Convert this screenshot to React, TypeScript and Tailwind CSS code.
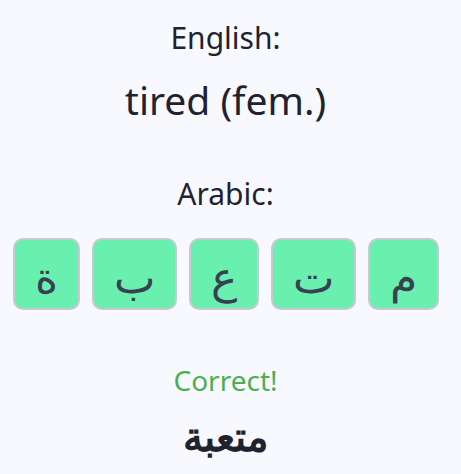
const letters = ["ة", "ب", "ع", "ت", "م"];

export default function App() {
  return (
    <div
      className="min-h-screen bg-[#f8f9ff] pr-[10px] text-[#1f2330] flex flex-col items-center"
      style={{ fontFamily: '"Segoe UI", "Noto Sans", "Open Sans", sans-serif' }}
    >
      <p className="mt-[18px] text-[30px] leading-[40px]">English:</p>
      <p className="mt-[20px] text-[39px] leading-[44px]">tired (fem.)</p>
      <p className="mt-[52px] text-[30px] leading-[40px]">Arabic:</p>
      <div className="mt-[24px] flex gap-3">
        {letters.map((l) => (
          <div
            key={l}
            className="flex h-[72px] items-center justify-center rounded-[10px] border-2 border-[#c8c8d4] bg-[#69f0ae] px-5 pt-1 text-[44px] leading-none text-[#374151]"
          >
            {l}
          </div>
        ))}
      </div>
      <p className="mt-[52px] text-[28px] leading-[36px] text-[#4caf50]">Correct!</p>
      <p className="mt-[14px] text-[40px] font-bold leading-[48px]">متعبة</p>
    </div>
  );
}
